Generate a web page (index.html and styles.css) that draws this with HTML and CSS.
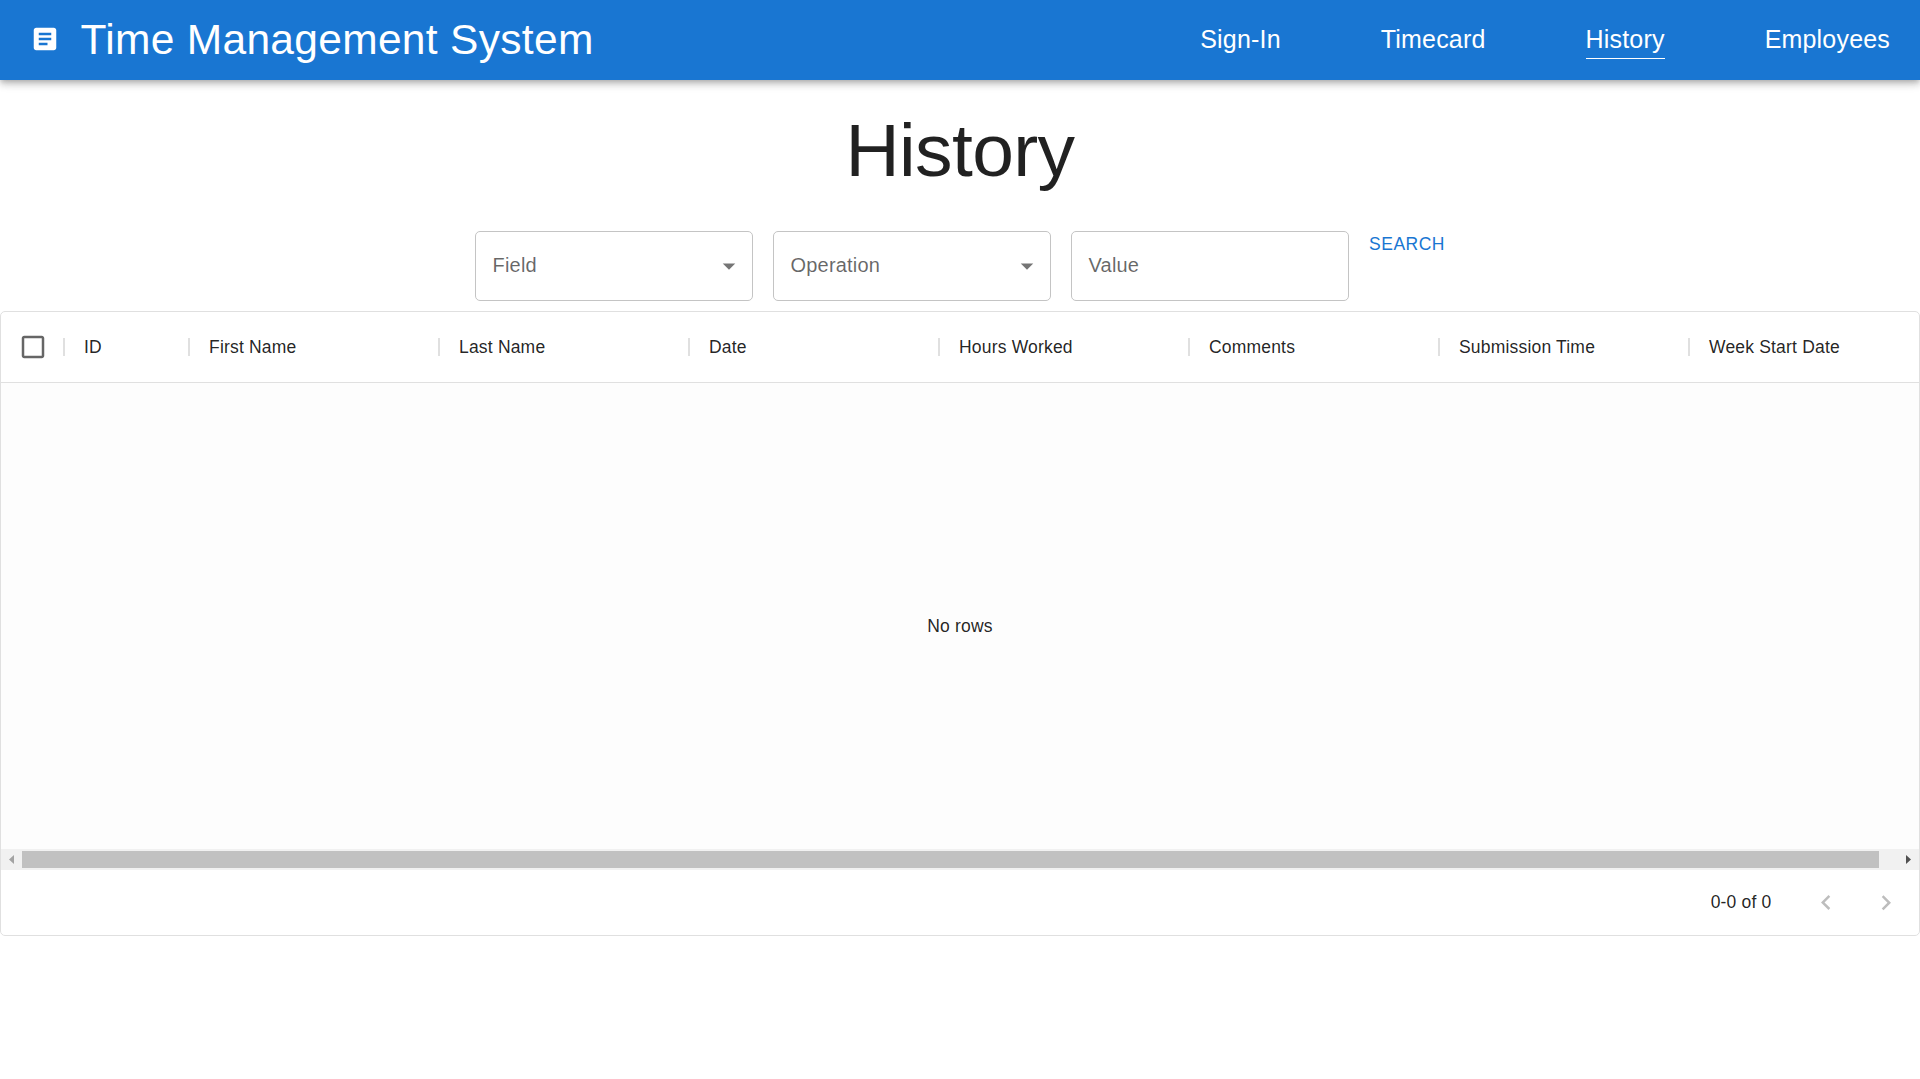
FILE: index.html
```html
<!DOCTYPE html>
<html lang="en">
<head>
<meta charset="utf-8">
<title>Time Management System</title>
<link rel="stylesheet" href="styles.css">
</head>
<body>
<header class="app-bar">
  <svg class="logo" viewBox="0 0 24 24"><path d="M19 3H5c-1.1 0-2 .9-2 2v14c0 1.1.9 2 2 2h14c1.1 0 2-.9 2-2V5c0-1.1-.9-2-2-2zm-5 14H7v-2h7v2zm3-4H7v-2h10v2zm0-4H7V7h10v2z"/></svg>
  <div class="brand">Time Management System</div>
  <nav class="nav">
    <a class="nav-link">Sign-In</a>
    <a class="nav-link">Timecard</a>
    <a class="nav-link active">History</a>
    <a class="nav-link">Employees</a>
  </nav>
</header>
<main>
  <h1 class="page-title">History</h1>
  <form class="filters">
    <div class="field"><span>Field</span><svg class="caret" viewBox="0 0 24 24"><path d="M7 10l5 5 5-5z"/></svg></div>
    <div class="field"><span>Operation</span><svg class="caret" viewBox="0 0 24 24"><path d="M7 10l5 5 5-5z"/></svg></div>
    <div class="field"><span>Value</span></div>
    <a class="search">SEARCH</a>
  </form>
  <section class="grid">
    <div class="grid-head">
      <div class="cell check"><svg class="checkbox" viewBox="0 0 24 24"><path d="M19 5v14H5V5h14m0-2H5c-1.1 0-2 .9-2 2v14c0 1.1.9 2 2 2h14c1.1 0 2-.9 2-2V5c0-1.1-.9-2-2-2z"/></svg></div>
      <div class="cell id">ID</div>
      <div class="cell">First Name</div>
      <div class="cell">Last Name</div>
      <div class="cell">Date</div>
      <div class="cell">Hours Worked</div>
      <div class="cell">Comments</div>
      <div class="cell">Submission Time</div>
      <div class="cell">Week Start Date</div>
    </div>
    <div class="grid-body">No rows</div>
    <div class="scrollbar">
      <svg class="arrow" viewBox="0 0 21 21"><path class="arrow-off" d="M13 6v9l-5-4.500z"/></svg>
      <div class="track"><div class="thumb"></div></div>
      <svg class="arrow" viewBox="0 0 21 21"><path class="arrow-on" d="M8 6v9l5-4.500z"/></svg>
    </div>
    <footer class="grid-foot">
      <span class="range">0-0 of 0</span>
      <svg class="page-icon" viewBox="0 0 24 24"><path d="M15.410 16.090l-4.580-4.590 4.580-4.590L14 5.500l-6 6 6 6z"/></svg>
      <svg class="page-icon" viewBox="0 0 24 24"><path d="M8.590 16.340l4.580-4.590-4.580-4.590L10 5.750l6 6-6 6z"/></svg>
    </footer>
  </section>
</main>
</body>
</html>
```
FILE: styles.css
```css
* { box-sizing: border-box; }
body {
  margin: 0;
  background: #fff;
  color: rgba(0, 0, 0, 0.87);
  font-family: "Liberation Sans", Arial, sans-serif;
  overflow: hidden;
}
.app-bar {
  position: relative;
  display: flex;
  align-items: center;
  height: 80px;
  padding: 0 30px;
  background: #1976d2;
  color: #fff;
  box-shadow: 0 2.5px 5px -1.250px rgba(0, 0, 0, 0.2), 0 5px 6.250px rgba(0, 0, 0, 0.14), 0 1.250px 12.500px rgba(0, 0, 0, 0.12);
}
.logo { width: 30px; height: 30px; margin-bottom: 2px; fill: #fff; }
.brand {
  margin-left: 20.5px;
  font-size: 42.5px;
  line-height: 52px;
  letter-spacing: 0.00735em;
  white-space: nowrap;
}
.nav { display: flex; gap: 100px; margin-left: auto; margin-bottom: 1px; }
.nav-link {
  font-size: 25px;
  line-height: 38px;
  letter-spacing: 0.0075em;
  border-bottom: 1px solid transparent;
}
.nav-link.active { border-bottom-color: #fff; }
.page-title {
  margin: 25px 0 0;
  font-size: 75px;
  line-height: 90px;
  font-weight: 400;
  letter-spacing: -0.00833em;
  text-align: center;
}
.filters {
  display: flex;
  justify-content: center;
  align-items: flex-start;
  gap: 20px;
  margin: 36px 0 10px;
}
.field {
  display: flex;
  align-items: center;
  justify-content: space-between;
  width: 278px;
  height: 70px;
  padding: 0 8px 2px 16.5px;
  border: 1px solid #c4c4c4;
  border-radius: 5px;
  color: rgba(0, 0, 0, 0.6);
  font-size: 20px;
  letter-spacing: 0.00938em;
}
.caret { width: 30px; height: 30px; margin-top: 2px; fill: rgba(0, 0, 0, 0.54); }
.search {
  color: #1976d2;
  font-size: 17.5px;
  line-height: 27px;
  letter-spacing: 0.02857em;
}
.grid {
  height: 625px;
  border: 1px solid #e0e0e0;
  border-radius: 5px;
  font-size: 17.5px;
  letter-spacing: 0.01071em;
  overflow: hidden;
}
.grid-head {
  display: flex;
  height: 71px;
  border-bottom: 1px solid #e0e0e0;
}
.cell {
  position: relative;
  display: flex;
  align-items: center;
  flex: none;
  width: 250px;
  padding-left: 20px;
}
.cell.check { width: 63px; padding-left: 17px; }
.cell.id { width: 125px; }
.cell:not(:last-child)::after {
  content: "";
  position: absolute;
  right: -1px;
  top: 26px;
  width: 2px;
  height: 18px;
  background: #e0e0e0;
}
.checkbox { width: 30px; height: 30px; fill: rgba(0, 0, 0, 0.6); }
.grid-body {
  height: 466px;
  padding-top: 233px;
  background: #fdfdfd;
  line-height: 21px;
  text-align: center;
}
.scrollbar { display: flex; height: 21px; background: #f1f1f1; }
.arrow { width: 21px; height: 21px; }
.arrow-off { fill: #a3a3a3; }
.arrow-on { fill: #505050; }
.track { flex: 1; padding: 2px 0; }
.thumb { width: 1857px; height: 17px; background: #c1c1c1; }
.grid-foot {
  display: flex;
  align-items: center;
  justify-content: flex-end;
  height: 65px;
  padding-right: 18px;
}
.range { margin-right: 39.5px; }
.page-icon { width: 30px; height: 30px; fill: rgba(0, 0, 0, 0.26); }
.page-icon + .page-icon { margin-left: 30px; }
```
